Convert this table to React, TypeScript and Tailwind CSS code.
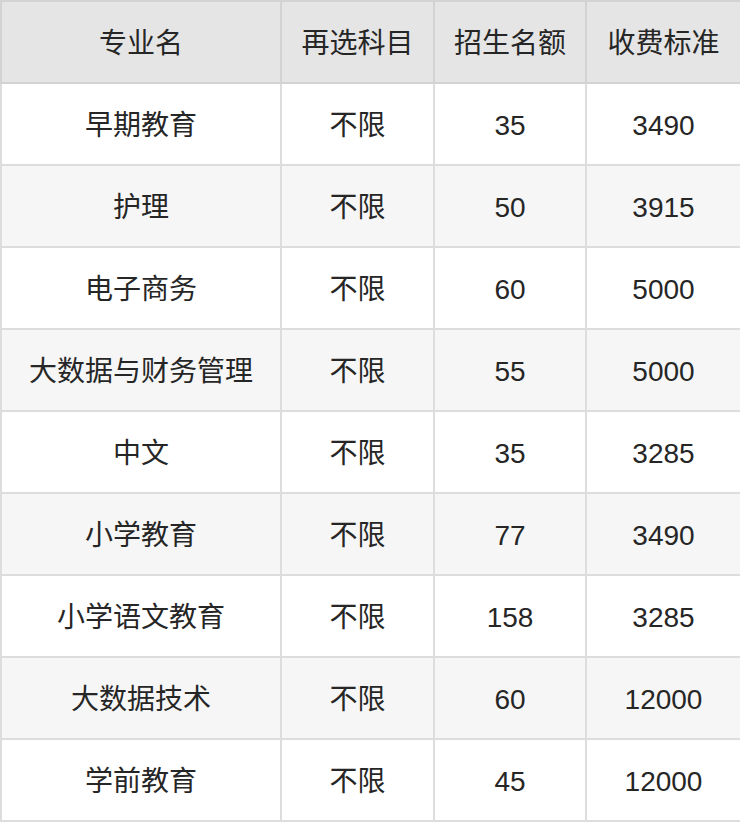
const rows: [string, string, string, string][] = [
  ["早期教育", "不限", "35", "3490"],
  ["护理", "不限", "50", "3915"],
  ["电子商务", "不限", "60", "5000"],
  ["大数据与财务管理", "不限", "55", "5000"],
  ["中文", "不限", "35", "3285"],
  ["小学教育", "不限", "77", "3490"],
  ["小学语文教育", "不限", "158", "3285"],
  ["大数据技术", "不限", "60", "12000"],
  ["学前教育", "不限", "45", "12000"],
]

const headers = ["专业名", "再选科目", "招生名额", "收费标准"]

export default function App() {
  return (
    <div className="w-[740px] h-[822px] bg-white font-['Liberation_Sans','Noto_Sans_CJK_SC',sans-serif] text-[#262626]">
      <table className="w-[740px] table-fixed border-collapse text-[28px] leading-none">
        <colgroup>
          <col className="w-[280px]" />
          <col className="w-[153px]" />
          <col className="w-[152px]" />
          <col className="w-[155px]" />
        </colgroup>
        <thead>
          <tr className="bg-[#e5e5e5]">
            {headers.map((h) => (
              <th key={h} className="h-[82px] border-2 border-[#d3d3d3] px-0 pt-[3px] pb-0 text-center font-normal">
                {h}
              </th>
            ))}
          </tr>
        </thead>
        <tbody>
          {rows.map((r, i) => (
            <tr key={i} className={i % 2 === 1 ? "bg-[#f6f6f6]" : "bg-white"}>
              {r.map((c, j) => (
                <td key={j} className="h-[82px] border-2 border-[#dddddd] px-0 pt-[3px] pb-0 text-center">
                  {c}
                </td>
              ))}
            </tr>
          ))}
        </tbody>
      </table>
    </div>
  )
}
